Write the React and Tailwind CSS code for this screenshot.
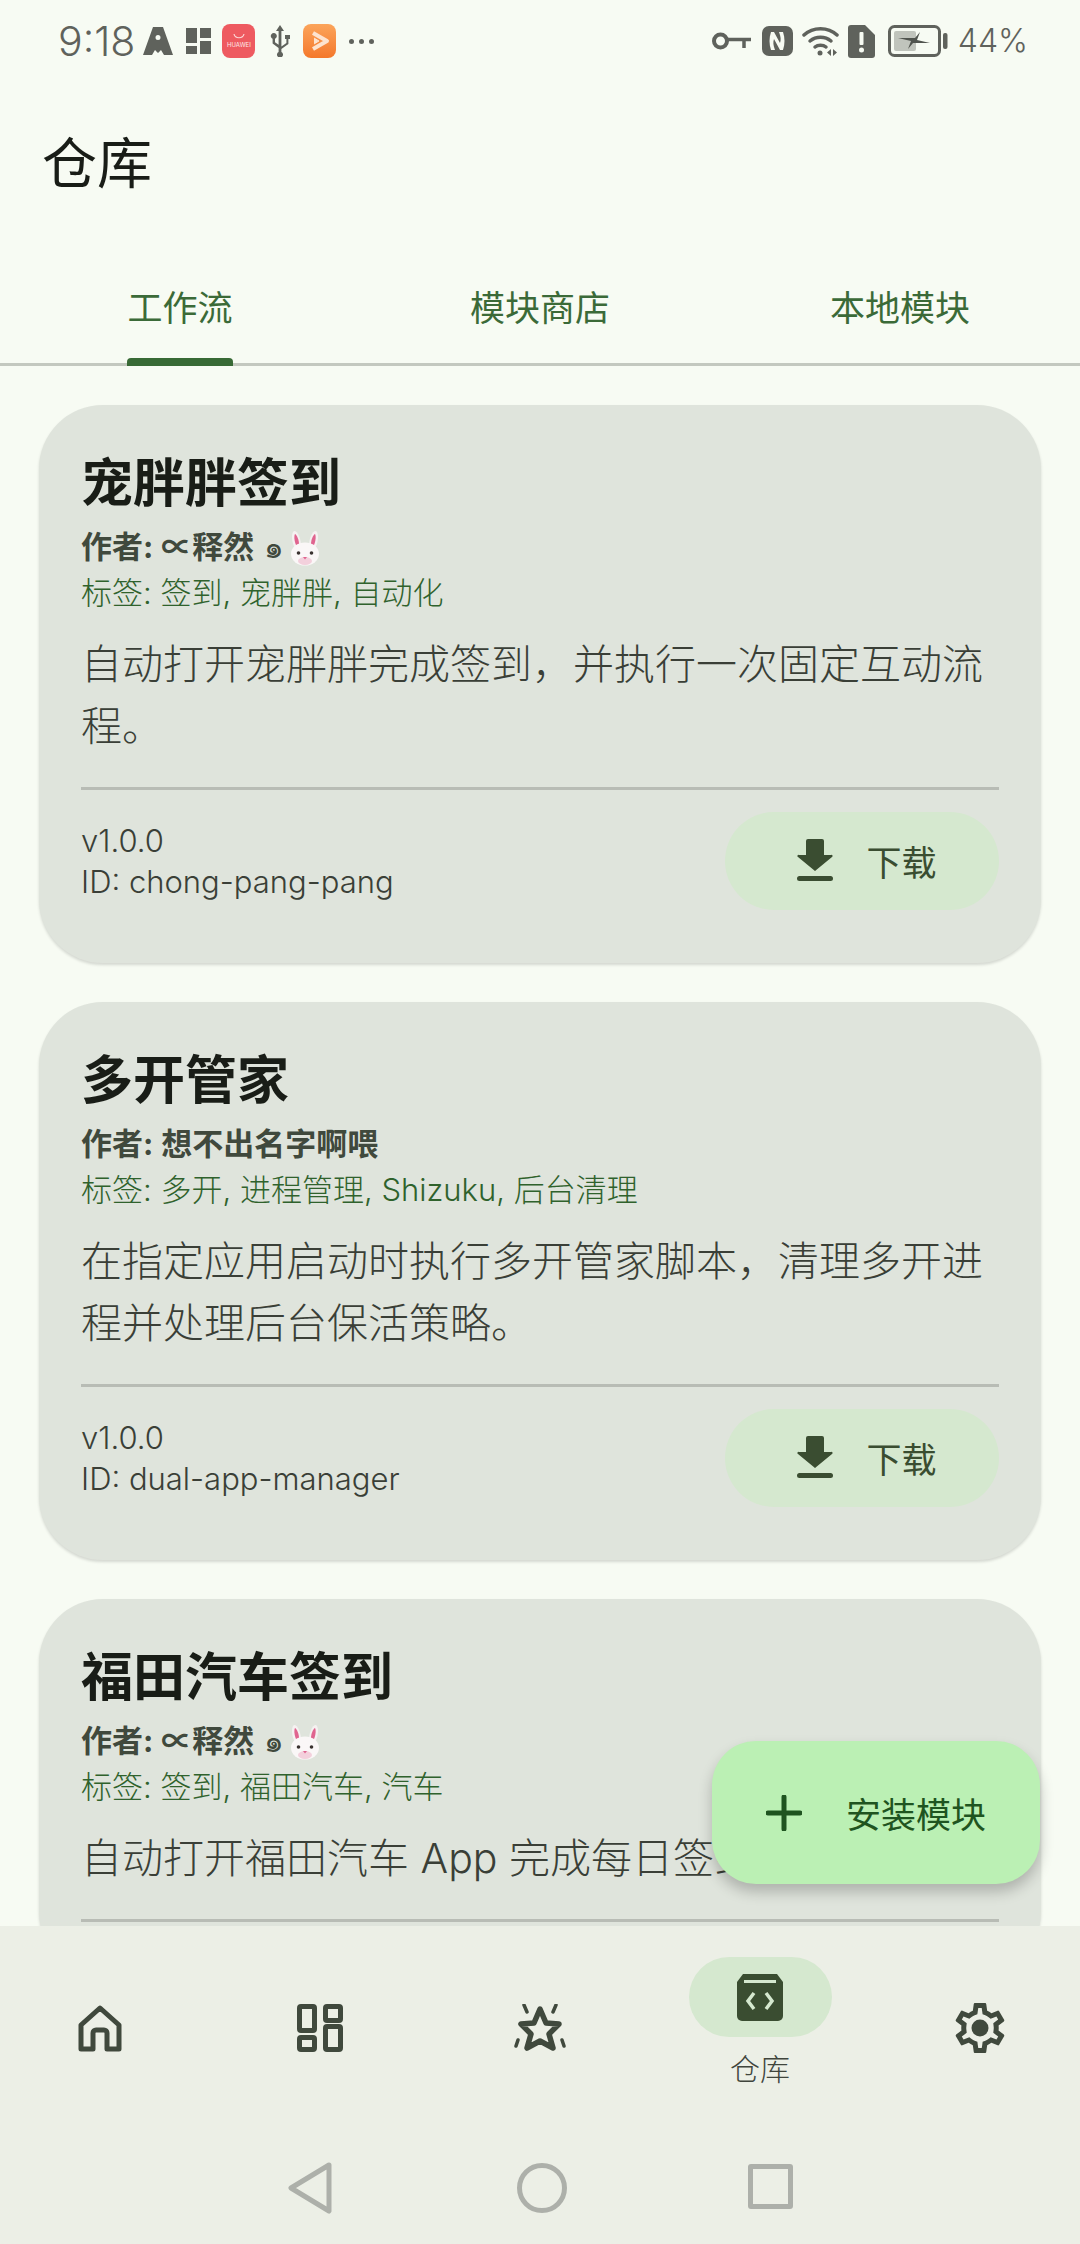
import React from "react";

const ink = "#40493d";

const cards = [
  {
    title: "宠胖胖签到",
    author: "∝释然",
    bunny: true,
    tags: "标签: 签到, 宠胖胖, 自动化",
    desc: ["自动打开宠胖胖完成签到，并执行一次固定互动流", "程。"],
    id: "chong-pang-pang",
  },
  {
    title: "多开管家",
    author: "想不出名字啊喂",
    tags: "标签: 多开, 进程管理, Shizuku, 后台清理",
    desc: ["在指定应用启动时执行多开管家脚本，清理多开进", "程并处理后台保活策略。"],
    id: "dual-app-manager",
  },
  {
    // footer of this one is below the nav, so it has no id
    title: "福田汽车签到",
    author: "∝释然",
    bunny: true,
    tags: "标签: 签到, 福田汽车, 汽车",
    desc: ["自动打开福田汽车 App 完成每日签到。"],
  },
];

const Bunny = () => (
  <svg width="34" height="36" viewBox="0 0 34 36" className="ml-[4px]">
    <path d="M8 20C3 12 3 3 6 1c4 0 7 8 7 15z" fill="#f5f1f1" />
    <path d="M8 15C6 10 6 6 7 4c2 1 4 6 4 10z" fill="#e0648f" />
    <path d="M26 20c5-8 5-17 2-19-4 0-7 8-7 15z" fill="#f5f1f1" />
    <path d="M26 15c2-5 2-9 1-11-2 1-4 6-4 10z" fill="#e0648f" />
    <ellipse cx="17" cy="24" rx="14" ry="11.5" fill="#faf7f7" />
    <ellipse cx="17" cy="31" rx="7" ry="4" fill="#f3d0dc" />
    <circle cx="10.5" cy="23" r="1.8" fill="#3a3230" />
    <circle cx="23.5" cy="23" r="1.8" fill="#3a3230" />
    <path d="M15 27h4l-2 2.5z" fill="#e0648f" />
  </svg>
);

const DownloadIcon = () => (
  <svg width="36" height="44" viewBox="0 0 36 44" fill="#3a4d31">
    <path d="M11 0h14a2 2 0 0 1 2 2v14h7a1 1 0 0 1 1 2L18 32 1 18a1 1 0 0 1 1-2h7V2a2 2 0 0 1 2-2z" />
    <rect x="0" y="37" width="36" height="5" rx="2.5" />
  </svg>
);

const Card = ({ title, author, bunny, tags, desc, id }) => (
  <div className="rounded-[64px] bg-[#dfe4dc] px-[42px] pt-[48px] pb-[53px] shadow-[0_2px_3px_rgba(0,0,0,0.14)]">
    <div className="text-[52px] leading-[62px] font-bold text-[#191d17]">{title}</div>
    <div className="mt-[10px] flex h-[45px] items-center text-[31px] font-bold text-[#40493d]">
      <span>作者: </span>
      <span className="ml-[8px]">{author}</span>
      {bunny && (
        <>
          <span className="ml-[10px] font-normal">๑</span>
          <Bunny />
        </>
      )}
    </div>
    <div className="h-[45px] text-[31px] leading-[45px] font-light text-[#2f622c]">{tags}</div>
    <div className="mt-[18px] text-[41px] leading-[62px] font-light text-[#3a3f37]">
      {desc.map((line) => (
        <div key={line} className="whitespace-nowrap">{line}</div>
      ))}
    </div>
    <div className="mt-[30px] h-[3px] bg-[#b8bcb5]" />
    {id && (
      <div className="mt-[22px] flex items-center justify-between">
        <div className="text-[31px] leading-[41px] font-light text-[#3a3f37]">
          <div>v1.0.0</div>
          <div>ID: {id}</div>
        </div>
        <div className="flex h-[98px] w-[274px] items-center justify-center gap-[33px] rounded-full bg-[#d5e8cf] pl-[10px]">
          <DownloadIcon />
          <span className="pt-[4px] text-[35px] text-[#3a4d31]">下载</span>
        </div>
      </div>
    )}
  </div>
);

const StatusBar = () => (
  <div className="flex h-[82px] items-center justify-between pl-[58px] pr-[52px] text-[#5f625c]">
    <div className="flex items-center">
      <span className="text-[41px] font-light leading-none">9:18</span>
      <svg width="30" height="28" viewBox="0 0 30 28" fill="#5f625c" className="ml-[8px]">
        <path d="M10 0h10l10 28H21l-3-5-3 3-3-3-3 5H0zM15 8a2.5 2.5 0 1 0 0 5 2.5 2.5 0 0 0 0-5z" />
      </svg>
      <svg width="25" height="26" viewBox="0 0 25 26" fill="#5f625c" className="ml-[13px]">
        <rect width="11" height="15" />
        <rect x="14" width="11" height="10" />
        <rect y="18" width="11" height="8" />
        <rect x="14" y="13" width="11" height="13" />
      </svg>
      <div className="ml-[11px] flex h-[34px] w-[33px] flex-col items-center justify-center rounded-[8px] bg-[#ee5a60]">
        <svg width="12" height="5" viewBox="0 0 12 5" fill="none" stroke="#fbd5d5" strokeWidth="1.2">
          <path d="M1 0c1 5 9 5 10 0" />
        </svg>
        <span className="mt-[3px] text-[6px] leading-none text-[#fde8e8]">HUAWEI</span>
      </div>
      <svg width="22" height="32" viewBox="0 0 22 32" fill="#5f625c" className="ml-[14px]">
        <path d="M11 0l4 6h-2.600v15.500l5-3.500v-4h-1.400V10h5v4h-1.600v5l-7 5v3a3 3 0 1 1-2.800 0v-4l-6-4.500V13.800a3 3 0 1 1 2.400 0v3.500l3.600 2.500V6H7z" />
      </svg>
      <div className="ml-[12px] flex h-[34px] w-[33px] items-center justify-center rounded-[8px] bg-gradient-to-b from-[#fba45a] to-[#f4782a]">
        <svg width="20" height="22" viewBox="0 0 20 22" fill="none" stroke="#fde3cf" strokeWidth="4" strokeLinejoin="round">
          <path d="M3 3l14 8-14 8" />
          <path d="M4 8l5 3-5 3" fill="#fde3cf" strokeWidth="1" />
        </svg>
      </div>
      <div className="ml-[13px] flex gap-[5px]">
        <span className="h-[5px] w-[5px] rounded-full bg-[#5f625c]" />
        <span className="h-[5px] w-[5px] rounded-full bg-[#5f625c]" />
        <span className="h-[5px] w-[5px] rounded-full bg-[#5f625c]" />
      </div>
    </div>
    <div className="flex items-center">
      <svg width="39" height="18" viewBox="0 0 39 18" fill="none" stroke="#5f625c">
        <circle cx="8.500" cy="9" r="6.500" strokeWidth="4" />
        <path d="M15 7.500h24" strokeWidth="3.500" />
        <path d="M32 8v8" strokeWidth="3.500" />
      </svg>
      <svg width="31" height="30" viewBox="0 0 31 30" className="ml-[11px]">
        <rect width="31" height="30" rx="7" fill="#5f625c" />
        <path d="M9 6c-2 6-2 12 0 18l4 0c-2-5-2-8-1-11l6 11h3c2-6 2-12 0-18h-4c2 5 2 8 1 11L12 6z" fill="#f7fbf3" />
      </svg>
      <svg width="37" height="31" viewBox="0 0 37 31" fill="none" stroke="#5f625c" strokeWidth="3.500" strokeLinecap="round" className="ml-[9px]">
        <path d="M2 9c9-8.500 24-8.500 33 0" />
        <path d="M8 15c6-5 15-5 21 0" />
        <path d="M13 21c3-2.500 8-2.500 11 0" />
        <circle cx="18" cy="27" r="2.500" fill="#5f625c" stroke="none" />
        <path d="M29 23l-4 3.500 4 3.500zM31 23l4 3.500-4 3.500z" fill="#5f625c" stroke="none" />
      </svg>
      <svg width="27" height="33" viewBox="0 0 27 33" className="ml-[9px]">
        <path d="M3 0h14l10 10v20a3 3 0 0 1-3 3H3a3 3 0 0 1-3-3V3a3 3 0 0 1 3-3z" fill="#5f625c" />
        <rect x="11.500" y="7" width="4" height="13" rx="1" fill="#f7fbf3" />
        <circle cx="13.500" cy="25" r="2.500" fill="#f7fbf3" />
      </svg>
      <svg width="60" height="32" viewBox="0 0 60 32" className="ml-[13px]">
        <rect x="1.500" y="1.500" width="50" height="29" rx="5" fill="none" stroke="#5f625c" strokeWidth="3" />
        <rect x="6" y="6" width="22" height="20" rx="2" fill="#c0c4bc" />
        <path d="M10 13l17 0 5-6-3 8 13 3-17 0-5 6 3-8z" fill="#50544e" />
        <rect x="55" y="8" width="4.500" height="16" rx="2" fill="#5f625c" />
      </svg>
      <span className="ml-[10px] text-[32px] font-light leading-none">44%</span>
    </div>
  </div>
);

const tabs = ["工作流", "模块商店", "本地模块"];

const Tabs = () => (
  <div className="relative grid h-[116px] grid-cols-3 border-b-[3px] border-[#c3c8bf]">
    {tabs.map((tab, i) => (
      <div key={tab} className="relative flex items-center justify-center pt-[3px] text-[35px] text-[#3b6a38]">
        {tab}
        {i === 0 && (
          <div className="absolute bottom-[-3px] h-[8px] w-[106px] rounded-t-[4px] bg-[#386a35]" />
        )}
      </div>
    ))}
  </div>
);

const HomeIcon = () => (
  <svg width="44" height="48" viewBox="0 0 44 48" fill="none" stroke={ink} strokeWidth="5" strokeLinejoin="round">
    <path d="M22 3L3 20v24h12V28a3 3 0 0 1 3-3h8a3 3 0 0 1 3 3v16h12V20z" />
  </svg>
);

const GridIcon = () => (
  <svg width="46" height="48" viewBox="0 0 46 48" fill="none" stroke={ink} strokeWidth="5">
    <rect x="2.500" y="2.500" width="15" height="24" rx="1.500" />
    <rect x="28.500" y="2.500" width="15" height="14" rx="1.500" />
    <rect x="2.500" y="33.500" width="15" height="12" rx="1.500" />
    <rect x="28.500" y="22.500" width="15" height="23" rx="1.500" />
  </svg>
);

const StarIcon = () => (
  <svg width="54" height="48" viewBox="0 0 54 48" fill="none" stroke={ink} strokeLinecap="round">
    <path d="M27 5l6 14 13 1-10 10 4 14-13-7-13 7 4-14L8 20l13-1z" strokeWidth="5.500" strokeLinejoin="round" />
    <path d="M11 1l3 7M43 1l-3 7M3 42l2-6M51 42l-2-6" strokeWidth="3.500" />
  </svg>
);

const PackageIcon = () => (
  <svg width="46" height="47" viewBox="0 0 46 47" fill="#3a4d31">
    <path d="M6 0h34l6 8v34a5 5 0 0 1-5 5H5a5 5 0 0 1-5-5V8z" />
    <rect x="7" y="6" width="32" height="3" fill="#d5e8cf" />
    <path d="M17 19l-6 8 6 8M29 19l6 8-6 8" fill="none" stroke="#d5e8cf" strokeWidth="3.500" />
  </svg>
);

const GearIcon = () => (
  <svg width="60" height="60" viewBox="0 0 24 24" fill={ink}>
    <path d="M19.430 12.980c.04-.32.07-.64.07-.98 0-.34-.03-.66-.07-.98l2.110-1.650c.19-.15.24-.42.12-.64l-2-3.460c-.09-.16-.26-.25-.44-.25-.06 0-.12.01-.17.03l-2.490 1c-.52-.4-1.080-.73-1.690-.98l-.38-2.650C14.460 2.180 14.250 2 14 2h-4c-.25 0-.46.18-.49.42l-.38 2.650c-.61.25-1.170.59-1.690.98l-2.490-1c-.06-.02-.12-.03-.18-.03-.17 0-.34.09-.43.25l-2 3.460c-.13.22-.07.49.12.64l2.110 1.650c-.04.32-.07.65-.07.98 0 .33.03.66.07.98l-2.110 1.650c-.19.15-.24.42-.12.64l2 3.460c.09.16.26.25.44.25.06 0 .12-.01.17-.03l2.490-1c.52.4 1.080.73 1.690.98l.38 2.650c.03.24.24.42.49.42h4c.25 0 .46-.18.49-.42l.38-2.650c.61-.25 1.170-.59 1.690-.98l2.490 1c.06.02.12.03.18.03.17 0 .34-.09.43-.25l2-3.460c.12-.22.07-.49-.12-.64l-2.110-1.650zm-1.980-1.710c.04.31.05.52.05.73 0 .21-.02.43-.05.73l-.14 1.130.89.7 1.080.84-.7 1.210-1.270-.51-1.040-.42-.9.68c-.43.32-.84.56-1.250.73l-1.060.43-.16 1.130-.2 1.350h-1.400l-.19-1.350-.16-1.130-1.060-.43c-.43-.18-.83-.41-1.230-.71l-.91-.7-1.060.43-1.270.51-.7-1.210 1.080-.84.89-.7-.14-1.130c-.03-.31-.05-.54-.05-.74s.02-.43.05-.73l.14-1.130-.89-.7-1.080-.84.7-1.210 1.270.51 1.040.42.9-.68c.43-.32.84-.56 1.250-.73l1.060-.43.16-1.130.2-1.350h1.390l.19 1.350.16 1.130 1.060.43c.43.18.83.41 1.230.71l.91.7 1.060-.43 1.270-.51.7 1.210-1.070.85-.89.7.14 1.130z" />
    <circle cx="12" cy="12" r="3.400" />
  </svg>
);

const BottomNav = () => (
  <div className="relative h-[318px] bg-[#ecefe6]">
    <div className="ml-[-10px] grid h-[176px] grid-cols-[220px_220px_220px_220px_220px]">
      <div className="flex items-center justify-center pt-[30px]"><HomeIcon /></div>
      <div className="flex items-center justify-center pt-[28px]"><GridIcon /></div>
      <div className="flex items-center justify-center pt-[28px]"><StarIcon /></div>
      <div className="flex flex-col items-center pt-[31px]">
        <div className="flex h-[80px] w-[143px] items-center justify-center rounded-full bg-[#d5e8cf]">
          <PackageIcon />
        </div>
        <span className="mt-[14px] text-[30px] leading-[36px] font-light text-[#40453d]">仓库</span>
      </div>
      <div className="flex items-center justify-center pt-[28px]"><GearIcon /></div>
    </div>
    <div className="flex items-center pt-[60px] pl-[288px]">
      <svg width="44" height="52" viewBox="0 0 44 52" fill="none" stroke="#adb0aa" strokeWidth="5" strokeLinejoin="round">
        <path d="M41 3L3 26l38 23z" />
      </svg>
      <div className="ml-[185px] h-[50px] w-[50px] rounded-full border-[5px] border-[#adb0aa]" />
      <div className="mb-[3px] ml-[181px] h-[45px] w-[45px] rounded-[3px] border-[5px] border-[#adb0aa]" />
    </div>
  </div>
);

export default function App() {
  return (
    <div className="relative flex h-[2244px] w-[1080px] flex-col overflow-hidden bg-[#f7fbf3] font-['Inter','Noto_Sans_CJK_SC',sans-serif]">
      <StatusBar />
      <div className="flex h-[168px] items-center pb-[5px] pl-[42px] text-[55px] text-[#191d17]">仓库</div>
      <Tabs />
      <div className="min-h-0 flex-1 overflow-hidden px-[39px] pt-[39px]">
        <div className="flex flex-col gap-[39px]">
          {cards.map((card) => (
            <Card key={card.title} {...card} />
          ))}
        </div>
      </div>
      <BottomNav />
      {/* fab sits over the list */}
      <div className="absolute left-[712px] top-[1741px] flex h-[143px] w-[328px] items-center rounded-[44px] bg-[#bbf0b4] pl-[54px] shadow-[0_8px_14px_rgba(0,0,0,0.22)]">
        <svg width="36" height="36" viewBox="0 0 36 36" stroke="#1f5420" strokeWidth="5" strokeLinecap="round">
          <path d="M18 2v32M2 18h32" />
        </svg>
        <span className="ml-[44px] pt-[5px] text-[35px] text-[#1f5420]">安装模块</span>
      </div>
    </div>
  );
}
